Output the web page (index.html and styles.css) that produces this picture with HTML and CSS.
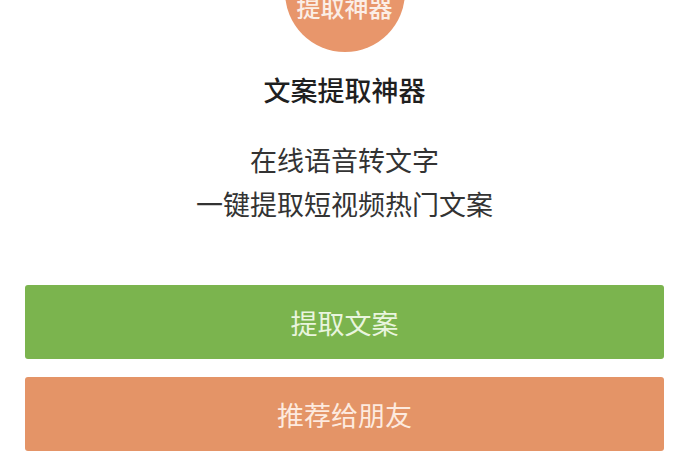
FILE: index.html
```html
<!DOCTYPE html>
<html lang="zh-CN">
<head>
<meta charset="utf-8">
<title>文案提取神器</title>
<link rel="stylesheet" href="styles.css">
</head>
<body>
<div class="page">
  <div class="logo"><span class="logo-text">提取神器</span></div>
  <h1 class="title">文案提取神器</h1>
  <p class="desc">在线语音转文字<br>一键提取短视频热门文案</p>
  <div class="actions">
    <button class="btn btn-green">提取文案</button>
    <button class="btn btn-orange">推荐给朋友</button>
  </div>
</div>
</body>
</html>
```

FILE: styles.css
```css
html, body {
  margin: 0;
  padding: 0;
  background: #ffffff;
  overflow: hidden;
}
body {
  font-family: "Noto Sans CJK SC", "Noto Sans", sans-serif;
  width: 700px;
  height: 470px;
}
.page {
  width: 639px;
  margin-left: 25px;
  display: flex;
  flex-direction: column;
  align-items: center;
}
.logo {
  width: 120px;
  height: 120px;
  margin-top: -68px;
  border-radius: 50%;
  background: #e8966b;
  box-sizing: border-box;
  padding-top: 60px;
  display: flex;
  justify-content: center;
}
.logo-text {
  font-size: 24px;
  line-height: 30px;
  color: #fbeee6;
  font-weight: 500;
}
.title {
  margin: 20px 0 0;
  font-size: 27px;
  line-height: 36px;
  font-weight: 500;
  color: #1f1f1f;
}
.desc {
  margin: 30px 0 0;
  font-size: 27px;
  line-height: 44px;
  color: #333333;
  text-align: center;
}
.actions {
  margin-top: 59px;
  width: 100%;
  display: flex;
  flex-direction: column;
  gap: 18px;
}
.btn {
  display: block;
  width: 100%;
  height: 74px;
  border: none;
  border-radius: 3px;
  font-family: inherit;
  font-size: 27px;
  padding: 0;
}
.btn-green {
  background: #7bb44e;
  color: #e9f5de;
}
.btn-orange {
  background: #e49467;
  color: #fdeadf;
}
```
